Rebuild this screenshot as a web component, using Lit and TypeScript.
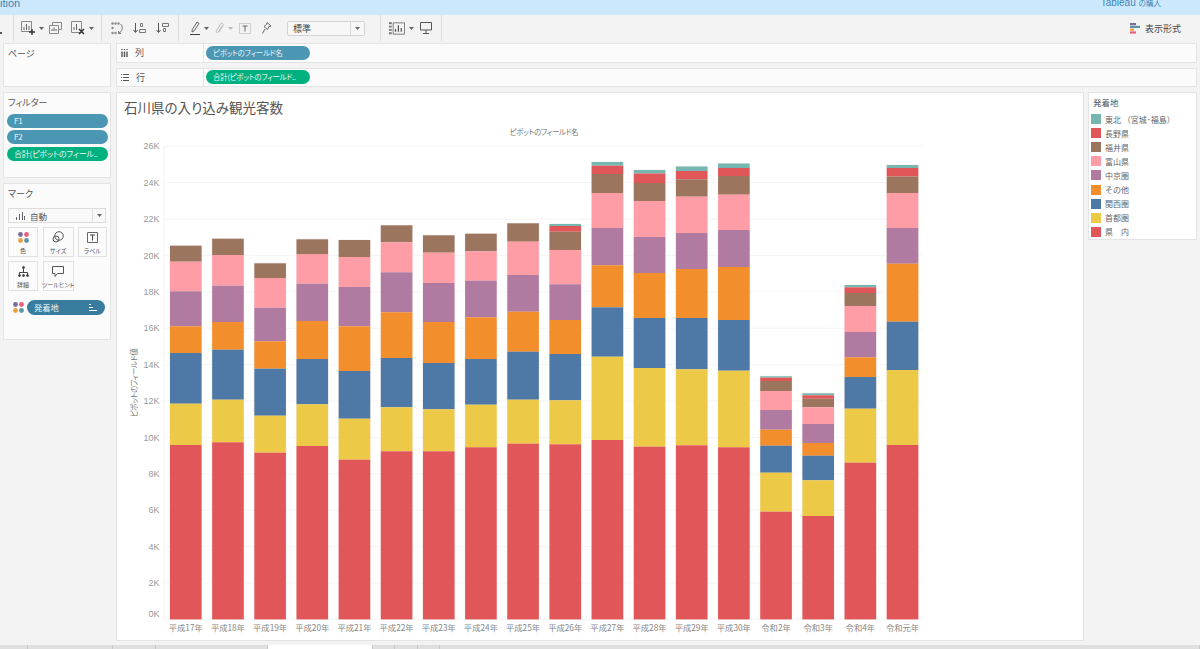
import { LitElement, html, svg, css } from "lit";
import { customElement } from "lit/decorators.js";

const COLORS = ["#76b7b2", "#e15759", "#9c755f", "#ff9da7", "#b07aa1", "#f28e2b", "#4e79a7", "#edc948", "#e15759"];
const BOTTOM = 619.4;
// Segment tops in page pixels, stacked from the top: teal, red, brown, pink, purple, orange, blue, yellow, red
const BARS: [string, number[]][] = [
  ["平成17年", [245.7, 245.7, 245.7, 261.7, 291.3, 326.3, 353, 403.7, 445]],
  ["平成18年", [238.7, 238.7, 238.7, 255, 285.7, 322, 349.7, 399.7, 442.3]],
  ["平成19年", [263.3, 263.3, 263.3, 278, 307.7, 341.3, 368.7, 415.7, 452.7]],
  ["平成20年", [239.3, 239.3, 239.3, 254, 283.7, 321, 359, 404.3, 446]],
  ["平成21年", [240, 240, 240, 257, 287, 326.3, 371, 418.7, 459.7]],
  ["平成22年", [225.3, 225.3, 225.3, 242.3, 272.3, 312.3, 358, 407.3, 451.3]],
  ["平成23年", [235.3, 235.3, 235.3, 252.7, 283, 322, 363, 409.3, 451.3]],
  ["平成24年", [233.7, 233.7, 233.7, 251.3, 280.7, 317.3, 359, 404.7, 447.3]],
  ["平成25年", [223.3, 223.3, 223.3, 241.7, 275, 311.7, 351.7, 399.7, 443.7]],
  ["平成26年", [224, 226, 231.7, 250, 284.3, 320, 354, 400.3, 444.3]],
  ["平成27年", [162, 165.7, 174, 193, 228, 265.3, 307.3, 356.7, 440]],
  ["平成28年", [170, 173.5, 183, 201, 237, 273, 318, 368, 446.7]],
  ["平成29年", [166.5, 171, 179.3, 196.7, 233, 269, 318, 369.3, 445.3]],
  ["平成30年", [163.5, 168, 176, 194.7, 230, 267, 320, 370.7, 447.3]],
  ["令和2年", [376.3, 377.7, 381, 391, 410, 429.7, 445.7, 472.7, 511.7]],
  ["令和3年", [393.3, 395.3, 398.7, 407.3, 424, 443, 455.7, 480.3, 516]],
  ["令和4年", [285, 287.3, 293, 306, 332, 357.3, 377, 408.7, 462.7]],
  ["令和元年", [165, 168, 176.5, 193, 228, 263.7, 321.7, 370, 445]],
];
const LEGEND: [string, string][] = [
  ["東北 （宮城･福島）", "#76b7b2"], ["長野県", "#e15759"], ["福井県", "#9c755f"],
  ["富山県", "#ff9da7"], ["中京圏", "#b07aa1"], ["その他", "#f28e2b"],
  ["関西圏", "#4e79a7"], ["首都圏", "#edc948"], ["県　内", "#e15759"],
];
const TICKS = Array.from({ length: 14 }, (_, i) => i * 2);
const TABS = [28, 85, 43, 112, 105, 22, 23, 22, 760];

const caret = html`<svg class="caret" width="5" height="3" viewBox="0 0 5 3"><path d="M0 0h5L2.500 3z" fill="#666"/></svg>`;
const dots = html`<svg width="11" height="11" viewBox="0 0 11 11"><circle cx="2.500" cy="2.500" r="2.400" fill="#7b6a9c"/><circle cx="8.500" cy="2.500" r="2.400" fill="#e8607a"/><circle cx="2.500" cy="8.500" r="2.400" fill="#eba03c"/><circle cx="8.500" cy="8.500" r="2.400" fill="#5f93a6"/></svg>`;

@customElement("app-root")
export class AppRoot extends LitElement {
  static styles = css`
    :host { display: block; width: 1200px; height: 649px; overflow: hidden; background: #f3f3f3; font-family: "Noto Sans CJK JP", "Noto Sans", sans-serif; color: #555; font-feature-settings: "palt"; }
    .app { display: flex; flex-direction: column; height: 649px; }
    .top { height: 15px; flex: none; background: #cce8fc; display: flex; justify-content: space-between; overflow: hidden; font: 11px/6px "Liberation Sans", "Noto Sans CJK JP", sans-serif; color: #3f85b5; }
    .top .buy { margin-right: 39px; font-size: 10px; }
    .top .buy b { font-weight: 400; font-size: 7.500px; }
    .toolbar { height: 28px; flex: none; display: flex; align-items: center; box-sizing: border-box; padding-bottom: 2px; }
    .group { display: flex; align-items: center; height: 26px; border-right: 1px solid #dcdcdc; box-sizing: border-box; }
    .g1 { width: 14px; padding-top: 9px; }
    .g2 { width: 88px; padding-left: 7px; }
    .g3 { width: 77px; padding-left: 9px; gap: 10px; }
    .g4 { width: 202px; padding-left: 11px; }
    .g5 { width: 61px; padding-left: 7px; }
    .ml1 { margin-left: 2px; } .ml5 { margin-left: 5px; } .ml6 { margin-left: 6px; } .ml9 { margin-left: 9px; } .ml10 { margin-left: 10px; } .ml11 { margin-left: 11px; }
    .caret { margin-left: 4px; flex: none; }
    .select { margin-left: 15px; width: 78px; height: 15px; box-sizing: border-box; border: 1px solid #d4d4d4; background: #f7f7f7; border-radius: 2px; display: flex; align-items: center; font-size: 9px; padding-left: 5px; color: #444; }
    .select span { flex: 1; }
    .select i { width: 13px; height: 13px; border-left: 1px solid #d8d8d8; display: flex; align-items: center; justify-content: center; }
    .select i svg { margin: 0; }
    .format { margin-left: auto; margin-right: 19px; display: flex; align-items: center; gap: 5px; font-size: 9px; color: #444; font-feature-settings: normal; }
    .work { flex: 1; min-height: 0; display: grid; grid-template-columns: 108px 1fr; grid-template-rows: 44px 549px; gap: 5px; padding: 0 3px; }
    .panel { background: #fbfbfb; border: 1px solid #e4e4e4; box-sizing: border-box; }
    .title { font-size: 9px; line-height: 12px; color: #555; padding: 4px 0 0 4px; }
    .shelves { display: flex; flex-direction: column; justify-content: space-between; }
    .shelf { display: flex; align-items: center; height: 19.500px; background: #fbfbfb; border: 1px solid #e4e4e4; box-sizing: border-box; font-size: 9px; }
    .shelf-label { width: 87px; height: 100%; box-sizing: border-box; border-right: 1px solid #e4e4e4; display: flex; align-items: center; gap: 7px; padding-left: 4px; }
    .pill { height: 14px; border-radius: 7px; color: #e9f4f7; font-size: 7.500px; letter-spacing: -.3px; line-height: 14px; padding-left: 7px; box-sizing: border-box; white-space: nowrap; overflow: hidden; }
    .blue { background: #4a96b3; } .green { background: #00b180; } .deep { background: #387d9e; }
    .shelf .pill { width: 104px; margin-left: 2px; }
    .left { display: flex; flex-direction: column; gap: 5px; }
    .filters { height: 86px; }
    .filter-list { display: flex; flex-direction: column; gap: 2.400px; padding: 5px 2px 0 3px; }
    .filter-list .pill { font-size: 8px; letter-spacing: -.2px; }
    .marks { height: 157px; padding: 0 4px; }
    .marks .title { padding-left: 0; padding-bottom: 8px; }
    .mark-select { height: 15px; border: 1px solid #dcdcdc; background: #f9f9f9; display: flex; align-items: center; font-size: 8.500px; gap: 5px; padding-left: 7px; box-sizing: border-box; }
    .mark-select span { flex: 1; }
    .mark-select i { width: 12px; height: 13px; border-left: 1px solid #dcdcdc; display: flex; align-items: center; justify-content: center; }
    .mark-select i svg { margin: 0; }
    .cards { display: grid; grid-template-columns: 30px 31px 29px; gap: 4px 4.500px; margin-top: 4px; }
    .card { height: 30px; border: 1px solid #e0e0e0; box-sizing: border-box; display: flex; flex-direction: column; align-items: center; justify-content: flex-end; font-size: 6px; line-height: 9px; gap: 3px; padding-bottom: 1px; white-space: nowrap; color: #555; }
    .encoding { display: flex; align-items: center; gap: 3px; margin: 9px 0 0 5px; }
    .encoding .pill { width: 78px; height: 15px; border-radius: 8px; line-height: 15px; font-size: 8.300px; letter-spacing: 0; display: flex; justify-content: space-between; align-items: center; padding: 0 8px 0 7px; }
    .content { display: flex; justify-content: space-between; align-items: flex-start; }
    .viz { width: 968px; height: 549px; background: #fff; }
    .viz svg { display: block; }
    .legend { width: 109px; height: 148px; background: #fff; }
    .legend-title { font-size: 8.500px; line-height: 19px; padding-left: 4px; height: 19px; }
    .row { display: flex; align-items: center; height: 14.100px; font-size: 8px; gap: 4px; padding-left: 2px; color: #666; white-space: pre; font-feature-settings: normal; }
    .row i { width: 10px; height: 10px; flex: none; }
    .tabs { height: 4px; flex: none; display: flex; background: #dfdfdf; }
    .tab { box-sizing: border-box; border-right: 1px solid #c8c8c8; }
    .tab.active { background: #fff; }
    text { font-family: "Noto Sans CJK JP", "Noto Sans", sans-serif; fill: #777; }
    .chart-title { font-size: 13.500px; fill: #555; }
    .axis-title { font-size: 7.500px; letter-spacing: -.4px; font-feature-settings: "palt"; }
    .tick { font-family: "Liberation Sans", sans-serif; font-size: 9px; fill: #999; }
    .cat { font-size: 8.300px; fill: #888; }
  `;

  private toolbar() {
    return html`<div class="toolbar">
      <div class="group g1"><svg width="3" height="2"><rect width="2" height="2" fill="#555"/></svg></div>
      <div class="group g2">
        <svg width="14" height="14" viewBox="0 0 14 14" fill="none" stroke="#666"><path d="M.500.500h10v10h-10z" stroke="#888"/><path d="M3 9V6M5.500 9V3M8 9V5"/><path d="M11 8v6M8 11h6" stroke="#333" stroke-width="1.400"/></svg>${caret}
        <svg class="ml5" width="13" height="12" viewBox="0 0 13 12" fill="none" stroke="#888"><path d="M3.500 3V.500h9v7H10"/><path d="M.500 3.500h9v8h-9z"/><path d="M3 9V7M5 9V5.500M7 9V7" stroke="#666"/></svg>
        <svg class="ml9" width="14" height="14" viewBox="0 0 14 14" fill="none" stroke="#666"><path d="M.500.500h10v11h-10z" stroke="#888"/><path d="M3 9V6M5.500 9V3"/><path d="M8 8l5 5M13 8l-5 5" stroke="#333" stroke-width="1.500"/></svg>${caret}
      </div>
      <div class="group g3">
        <svg width="12" height="13" viewBox="0 0 12 13" fill="none" stroke="#777"><g fill="#888" stroke="none"><circle cx="1.500" cy="1.500" r="1.200"/><circle cx="4.500" cy="1.500" r="1.200"/><circle cx="7.500" cy="1.500" r="1.200"/><circle cx="1.500" cy="6" r="1.200"/><circle cx="1.500" cy="11" r="1.200"/><circle cx="4.500" cy="11" r="1.200"/></g><path d="M9.500 2c2.300 2 2.300 5.500.500 7.500L7.500 11.500"/><path d="M7.500 9v2.500H10"/></svg>
        <svg width="13" height="12" viewBox="0 0 13 12" fill="none" stroke="#777"><path d="M2.500 1v9M.500 8l2 2.500 2-2.500" stroke="#555"/><path d="M7.500 1.500h2v3h-2zM6.500 7.500h6v3h-6z"/></svg>
        <svg width="13" height="12" viewBox="0 0 13 12" fill="none" stroke="#777"><path d="M2.500 1v9M.500 8l2 2.500 2-2.500" stroke="#555"/><path d="M6.500 1.500h6v3h-6zM7.500 6.500h2v3h-2z"/></svg>
      </div>
      <div class="group g4">
        <svg width="10" height="14" viewBox="0 0 10 14" fill="none" stroke="#666"><path d="M7 1l2 1.500L4 10l-2 1 .300-2.500z"/><path d="M0 13.500h10" stroke="#444"/></svg>${caret}
        <svg class="ml6" width="9" height="13" viewBox="0 0 9 13" fill="none" stroke="#bbb"><path d="M7 4L3.500 10c-1 1.500-3 .500-2-1.300L5.500 2c1-1.500 3.500-.300 2.500 1.500L4 10"/></svg>
        <svg class="caret ml11" width="5" height="3" viewBox="0 0 5 3"><path d="M0 0h5L2.500 3z" fill="#bbb"/></svg>
        <svg class="ml6" width="12" height="11" viewBox="0 0 12 11" fill="none"><path d="M.500.500h11v10H.500z" stroke="#aaa" stroke-dasharray="1 1"/><path d="M3.500 3h5M6 3v5.500" stroke="#666"/></svg>
        <svg class="ml11" width="10" height="12" viewBox="0 0 10 12" fill="none" stroke="#666"><path d="M5 .500l4 3.500-2 .500-1.500 3-3.500-3 2.500-2zM3 7l-2.500 4.500"/></svg>
        <div class="select"><span>標準</span><i>${caret}</i></div>
      </div>
      <div class="group g5">
        <svg width="17" height="13" viewBox="0 0 18 13" fill="none" stroke="#777"><path d="M5.500.500h12v12h-12z"/><path d="M8 10V7M11 10V3M14 10V6" stroke="#555" stroke-width="1.300"/><path d="M1 1h3M1 4.500h3M1 8h3M1 11.500h3" stroke-width="2"/></svg><svg class="caret ml1" width="5" height="3" viewBox="0 0 5 3"><path d="M0 0h5L2.500 3z" fill="#666"/></svg>
        <svg class="ml6" width="12" height="12" viewBox="0 0 12 12" fill="none" stroke="#555"><path d="M.500.500h11v7.500H.500zM6 8v3.500M3 11.500h6"/></svg>
      </div>
      <div class="format">
        <svg width="10" height="11" viewBox="0 0 10 11"><rect width="6" height="2.200" fill="#7b6a9c"/><rect y="2.800" width="10" height="2.200" fill="#5f93a6"/><rect y="5.600" width="4" height="2.200" fill="#eba03c"/><rect y="8.400" width="6" height="2.200" fill="#e8607a"/></svg>
        <span>表示形式</span>
      </div>
    </div>`;
  }

  private marks() {
    return html`<div class="panel marks">
      <div class="title">マーク</div>
      <div class="mark-select">
        <svg width="9" height="8" viewBox="0 0 9 8" stroke="#666"><path d="M.500 8V5M3.500 8V2M6.500 8V0M8.500 8V4"/></svg>
        <span>自動</span><i>${caret}</i>
      </div>
      <div class="cards">
        <div class="card">${dots}<span>色</span></div>
        <div class="card"><svg width="12" height="12" viewBox="0 0 12 12" fill="none" stroke="#555"><circle cx="7" cy="5" r="4.300"/><circle cx="4" cy="8" r="3"/></svg><span>サイズ</span></div>
        <div class="card"><svg width="11" height="11" viewBox="0 0 11 11" fill="none"><path d="M.500.500h10v10H.500z" stroke="#666"/><path d="M3 3h5M5.500 3v5.500" stroke="#444"/></svg><span>ラベル</span></div>
        <div class="card"><svg width="11" height="11" viewBox="0 0 11 11" fill="none" stroke="#444"><path d="M5.500 2v5M1.500 9V6.500h8V9"/><circle cx="5.500" cy="1.500" r="1" fill="#444"/><circle cx="1.500" cy="9.500" r="1" fill="#444"/><circle cx="5.500" cy="9.500" r="1" fill="#444"/><circle cx="9.500" cy="9.500" r="1" fill="#444"/></svg><span>詳細</span></div>
        <div class="card"><svg width="12" height="11" viewBox="0 0 12 11" fill="none" stroke="#555"><path d="M.500.500h11v7H5.500L3 10.500v-3H.500z"/></svg><span>ツールヒント</span></div>
      </div>
      <div class="encoding">${dots}<div class="pill deep"><span>発着地</span><svg width="9" height="8" viewBox="0 0 9 8" stroke="#fff"><path d="M1 .500h2M1 3.500h4M1 6.500h8"/></svg></div></div>
    </div>`;
  }

  private chart() {
    const y = (v: number) => BOTTOM - v * 18.2;
    return html`<svg width="966" height="547" viewBox="117 93 966 547">
      <text class="chart-title" x="124" y="113">石川県の入り込み観光客数</text>
      <text class="axis-title" x="544" y="135" text-anchor="middle">ピボットのフィールド名</text>
      <text class="axis-title" transform="translate(137 383) rotate(-90)" text-anchor="middle">ピボットのフィールド値</text>
      <path d="M164 146V620" stroke="#f2f2f2"/>
      ${TICKS.map(v => svg`
        <path d="M164 ${y(v)}H923" stroke="#f4f4f4"/>
        <text class="tick" x="159.500" y=${v === 0 ? 617 : y(v) + 3.2} text-anchor="end">${v}K</text>`)}
      ${BARS.map(([label, tops], i) => {
        const x = 170 + i * 42.16;
        return svg`
          <rect x=${x - 0.5} y=${tops[0] - 0.5} width="32.600" height=${BOTTOM - tops[0] + 0.5} fill="#f3e6e4" opacity=".6"/>
          ${tops.map((t, k) => {
            const end = k < 8 ? tops[k + 1] : BOTTOM;
            return end > t ? svg`<rect x=${x} y=${t} width="31.600" height=${end - t} fill=${COLORS[k]}/>` : null;
          })}
          <text class="cat" x=${x + 15.800} y="631" text-anchor="middle">${label}</text>`;
      })}
    </svg>`;
  }

  render() {
    return html`<div class="app">
      <div class="top"><span>ition</span><span class="buy">Tableau <b>の購入</b></span></div>
      ${this.toolbar()}
      <div class="work">
        <div class="panel"><div class="title">ページ</div></div>
        <div class="shelves">
          <div class="shelf"><div class="shelf-label"><svg width="7" height="8" viewBox="0 0 7 8" stroke="#555" stroke-width="1.400"><path d="M1 0v1M1 2.500V8M3.500 0v1M3.500 2.500V8M6 0v1M6 2.500V8"/></svg><span>列</span></div><div class="pill blue">ピボットのフィールド名</div></div>
          <div class="shelf"><div class="shelf-label"><svg width="8" height="7" viewBox="0 0 8 7" stroke="#555"><path d="M0 .500h1M2 .500h6M0 3.500h1M2 3.500h6M0 6.500h1M2 6.500h6"/></svg><span>行</span></div><div class="pill green">合計(ピボットのフィールド..</div></div>
        </div>
        <div class="left">
          <div class="panel filters">
            <div class="title">フィルター</div>
            <div class="filter-list">
              <div class="pill blue">F1</div><div class="pill blue">F2</div><div class="pill green">合計(ピボットのフィール..</div>
            </div>
          </div>
          ${this.marks()}
        </div>
        <div class="content">
          <div class="panel viz">${this.chart()}</div>
          <div class="panel legend">
            <div class="legend-title">発着地</div>
            ${LEGEND.map(([name, color]) => html`<div class="row"><i style="background:${color}"></i><span>${name}</span></div>`)}
          </div>
        </div>
      </div>
      <div class="tabs">${TABS.map((w, i) => html`<div class="tab ${i === 4 ? "active" : ""}" style="width:${w}px"></div>`)}</div>
    </div>`;
  }
}
